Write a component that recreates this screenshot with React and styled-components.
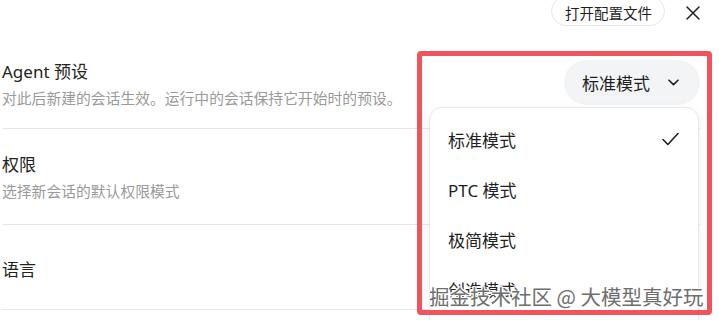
import React from "react";
import styled, { createGlobalStyle } from "styled-components";

const Global = createGlobalStyle`
  html, body { margin: 0; padding: 0; background: #ffffff; overflow: hidden; }
  body { font-family: "Noto Sans", "Noto Sans CJK SC", sans-serif; color: #1f1f1f; }
  * { box-sizing: border-box; }
`;

const Page = styled.div`
  position: relative;
  width: 719px;
  height: 320px;
  padding: 0 19px 0 2px;
  overflow: hidden;
`;

const Header = styled.div`
  display: flex;
  justify-content: flex-end;
  align-items: center;
  gap: 21px;
  height: 30px;
  margin-top: -4px;
  margin-bottom: 10px;
`;

const PillButton = styled.button`
  height: 30px;
  padding: 3px 12px 0 13px;
  border: 1px solid #e6e6e6;
  border-radius: 15px;
  background: #fff;
  font-family: "Noto Sans CJK SC", sans-serif;
  font-size: 14.5px;
  color: #1f1f1f;
  display: flex;
  align-items: center;
`;

const CloseBtn = styled.div`
  width: 14px;
  height: 14px;
  margin-top: 3px;
  display: flex;
  color: #1f1f1f;
`;

const Row = styled.div`
  display: flex;
  justify-content: space-between;
  align-items: center;
  padding-top: ${(p) => p.$pt}px;
  padding-bottom: ${(p) => p.$pb}px;
  border-bottom: 1px solid #e6e6e6;
`;

const TextBlock = styled.div`
  display: flex;
  flex-direction: column;
  gap: 3px;
  margin-top: ${(p) => p.$shift || 0}px;
  margin-bottom: ${(p) => -(p.$shift || 0)}px;
`;

const Title = styled.div`
  font-size: 17px;
  line-height: 24px;
  color: #222;
  font-family: "Noto Sans", "Noto Sans CJK SC", sans-serif;
`;

const Desc = styled.div`
  font-size: 14.8px;
  line-height: 22px;
  color: #9a9a9a;
  font-family: "Noto Sans CJK SC", sans-serif;
`;

const SelectWrap = styled.div`
  position: relative;
`;

const SelectPill = styled.div`
  height: 45px;
  width: 136px;
  padding: 0 21px 0 18px;
  border-radius: 23px;
  background: #f3f4f6;
  display: flex;
  align-items: center;
  justify-content: space-between;
  font-family: "Noto Sans CJK SC", sans-serif;
  font-size: 17px;
  color: #1f1f1f;
`;

const Menu = styled.div`
  position: absolute;
  top: calc(100% + 2px);
  right: 1px;
  width: 270px;
  padding: 6px 0;
  background: #fff;
  border: 1px solid #e8e8e8;
  border-radius: 13px;
  box-shadow: 0 4px 14px rgba(0, 0, 0, 0.06);
  z-index: 2;
`;

const MenuItem = styled.div`
  height: 50px;
  padding: 0 19px 0 18px;
  display: flex;
  align-items: center;
  justify-content: space-between;
  font-family: "Noto Sans", "Noto Sans CJK SC", sans-serif;
  font-size: 17px;
  color: #1f1f1f;
`;

const Annotation = styled.div`
  position: absolute;
  left: 417px;
  top: 51px;
  width: 295px;
  height: 264px;
  border: 5px solid #f0535a;
  border-radius: 4px;
  pointer-events: none;
  z-index: 3;
`;

const Watermark = styled.div`
  position: absolute;
  left: 429px;
  top: 281px;
  font-family: "Noto Sans CJK SC", sans-serif;
  font-size: 20.5px;
  line-height: 30px;
  color: #6e6e6e;
  white-space: nowrap;
  text-shadow: 1px 0 0 #fff, -1px 0 0 #fff, 0 1px 0 #fff, 0 -1px 0 #fff,
    1px 1px 0 #fff, -1px -1px 0 #fff, 1px -1px 0 #fff, -1px 1px 0 #fff;
  z-index: 4;
`;

const XIcon = () => (
  <svg width="14" height="14" viewBox="0 0 14 14" fill="none" stroke="currentColor" strokeWidth="1.5" strokeLinecap="round">
    <path d="M1 1 13 13M13 1 1 13" />
  </svg>
);

const Chevron = () => (
  <svg width="11" height="7" viewBox="0 0 11 7" fill="none" stroke="#1f1f1f" strokeWidth="1.6" strokeLinecap="round" strokeLinejoin="round">
    <path d="M1 1.2 5.5 5.6 10 1.2" />
  </svg>
);

const Check = () => (
  <svg width="17" height="14" viewBox="0 0 17 14" fill="none" stroke="#1f1f1f" strokeWidth="1.6" strokeLinecap="round" strokeLinejoin="round">
    <path d="M1 7.5 5.8 12.5 16 1.5" />
  </svg>
);

const options = [
  { label: "标准模式", selected: true },
  { label: "PTC 模式" },
  { label: "极简模式" },
  { label: "创造模式" },
  { label: "自定义模式" },
];

export default function App() {
  return (
    <>
      <Global />
      <Page>
        <Header>
          <PillButton>打开配置文件</PillButton>
          <CloseBtn>
            <XIcon />
          </CloseBtn>
        </Header>

        <Row $pt={22} $pb={21}>
          <TextBlock $shift={2}>
            <Title>Agent 预设</Title>
            <Desc>对此后新建的会话生效。运行中的会话保持它开始时的预设。</Desc>
          </TextBlock>
          <SelectWrap>
            <SelectPill>
              <span>标准模式</span>
              <Chevron />
            </SelectPill>
            <Menu>
              {options.map((o) => (
                <MenuItem key={o.label}>
                  <span>{o.label}</span>
                  {o.selected && <Check />}
                </MenuItem>
              ))}
            </Menu>
          </SelectWrap>
        </Row>

        <Row $pt={24} $pb={22}>
          <TextBlock>
            <Title>权限</Title>
            <Desc>选择新会话的默认权限模式</Desc>
          </TextBlock>
        </Row>

        <Row $pt={33} $pb={27}>
          <TextBlock>
            <Title>语言</Title>
          </TextBlock>
        </Row>

        <Annotation />
        <Watermark>掘金技术社区 @ 大模型真好玩</Watermark>
      </Page>
    </>
  );
}
